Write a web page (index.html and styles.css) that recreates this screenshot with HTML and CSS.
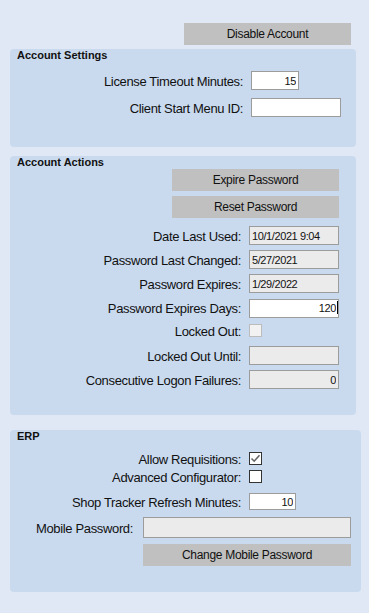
FILE: index.html
```html
<!DOCTYPE html>
<html lang="en">
<head>
    <meta charset="UTF-8">
    <meta name="viewport" content="width=device-width, initial-scale=1.0">
    <title>User Account</title>
    <link rel="stylesheet" href="styles.css">
</head>
<body>
    <div class="page">
        <div class="top-bar">
            <button class="btn">Disable Account</button>
        </div>

        <!-- Account Settings -->
        <div class="panel panel-settings">
            <div class="panel-title">Account Settings</div>
            <div class="panel-body">
                <div class="row">
                    <label class="lbl lbl-wide">License Timeout Minutes:</label>
                    <input class="field field-sm num" type="text" value="15">
                </div>
                <div class="row">
                    <label class="lbl lbl-wide">Client Start Menu ID:</label>
                    <input class="field field-md" type="text" value="">
                </div>
            </div>
        </div>

        <!-- Account Actions -->
        <div class="panel panel-actions">
            <div class="panel-title">Account Actions</div>
            <div class="panel-body">
                <div class="btn-row">
                    <button class="btn">Expire Password</button>
                </div>
                <div class="btn-row">
                    <button class="btn">Reset Password</button>
                </div>
                <div class="row row-first">
                    <label class="lbl">Date Last Used:</label>
                    <input class="field" type="text" value="10/1/2021 9:04" disabled>
                </div>
                <div class="row">
                    <label class="lbl">Password Last Changed:</label>
                    <input class="field" type="text" value="5/27/2021" disabled>
                </div>
                <div class="row">
                    <label class="lbl">Password Expires:</label>
                    <input class="field" type="text" value="1/29/2022" disabled>
                </div>
                <div class="row">
                    <label class="lbl">Password Expires Days:</label>
                    <span class="field-wrap">
                        <input class="field num" type="text" value="120">
                        <span class="caret"></span>
                    </span>
                </div>
                <div class="row row-check">
                    <label class="lbl">Locked Out:</label>
                    <span class="check check-disabled"></span>
                </div>
                <div class="row">
                    <label class="lbl">Locked Out Until:</label>
                    <input class="field" type="text" value="" disabled>
                </div>
                <div class="row">
                    <label class="lbl">Consecutive Logon Failures:</label>
                    <input class="field num" type="text" value="0" disabled>
                </div>
            </div>
        </div>

        <!-- ERP -->
        <div class="panel panel-erp">
            <div class="panel-title">ERP</div>
            <div class="panel-body">
                <div class="row row-cb">
                    <label class="lbl">Allow Requisitions:</label>
                    <span class="check">
                        <svg width="11" height="11" viewBox="0 0 11 11">
                            <path d="M1.5 5.5 L4.2 8.2 L9.5 2.2" fill="none" stroke="#666" stroke-width="1.6"/>
                        </svg>
                    </span>
                </div>
                <div class="row row-cb">
                    <label class="lbl">Advanced Configurator:</label>
                    <span class="check"></span>
                </div>
                <div class="row row-shop">
                    <label class="lbl">Shop Tracker Refresh Minutes:</label>
                    <input class="field field-shop num" type="text" value="10">
                </div>
                <div class="row row-mobile">
                    <label class="lbl lbl-short">Mobile Password:</label>
                    <input class="field field-mobile" type="text" value="" disabled>
                </div>
                <div class="btn-row btn-row-mobile">
                    <button class="btn btn-mobile">Change Mobile Password</button>
                </div>
            </div>
        </div>
    </div>
</body>
</html>
```

FILE: styles.css
```css
body {
    margin: 0;
    background-color: #dfe8f4;
    font-family: 'Liberation Sans', Arial, sans-serif;
    color: #111;
}
.page {
    padding: 23px 0 0 10px;
}
.top-bar {
    display: flex;
    justify-content: flex-end;
    padding-right: 18px;
}
.btn {
    width: 167px;
    height: 22px;
    padding: 0;
    border: none;
    background-color: #c0c0c0;
    font-family: 'Liberation Sans', Arial, sans-serif;
    font-size: 12px;
    letter-spacing: -0.3px;
    color: #111;
}
.panel {
    background-color: #c9daef;
    border-radius: 4px;
}
.panel-settings {
    width: 346px;
    margin-top: 4px;
}
.panel-actions {
    width: 346px;
    margin-top: 9px;
}
.panel-erp {
    width: 351px;
    margin-top: 15px;
}
.panel-title {
    font-size: 11px;
    font-weight: bold;
    line-height: 13px;
    padding: 0 7px;
}
.panel-body {
    display: flex;
    flex-direction: column;
}
.panel-settings .panel-body {
    padding: 9px 0 30px;
    gap: 8px;
}
.panel-actions .panel-body {
    padding: 0 0 26px;
    gap: 5px;
}
.panel-erp .panel-body {
    padding: 6px 0 26px;
}
.row {
    display: flex;
    align-items: center;
    height: 19px;
}
.lbl {
    width: 231px;
    margin-right: 8px;
    text-align: right;
    font-size: 13px;
    letter-spacing: -0.35px;
    padding-top: 2px;
    white-space: nowrap;
}
.lbl-wide {
    width: 233px;
}
.lbl-short {
    width: 123px;
    margin-right: 10px;
}
.field {
    box-sizing: border-box;
    width: 90px;
    height: 19px;
    margin: 0;
    padding: 0 2px;
    border: 1px solid #9c9c9c;
    background-color: #fff;
    font-family: 'Liberation Sans', Arial, sans-serif;
    font-size: 11px;
    letter-spacing: -0.4px;
    color: #111;
}
.field:disabled {
    background-color: #ebebeb;
    color: #111;
}
.num {
    text-align: right;
}
.field-sm {
    width: 48px;
}
.field-md {
    width: 90px;
}
.field-shop {
    width: 47px;
    height: 17px;
}
.field-mobile {
    width: 208px;
    height: 21px;
}
.field-wrap {
    position: relative;
    display: inline-block;
    height: 19px;
}
.caret {
    position: absolute;
    right: 1px;
    top: 3px;
    width: 1px;
    height: 13px;
    background-color: #000;
}
.btn-row {
    display: flex;
    padding-left: 162px;
}
.row-first {
    margin-top: 3px;
}
.row-check {
    margin-top: -1px;
    margin-bottom: 1px;
}
.check {
    box-sizing: border-box;
    display: inline-flex;
    align-items: center;
    justify-content: center;
    width: 13px;
    height: 13px;
    border: 1px solid #333;
    background-color: #fff;
}
.check-disabled {
    border-color: #bcbcbc;
    background-color: #f2f2f2;
}
.row-cb {
    height: 18px;
}
.row-shop {
    height: 17px;
    margin-top: 8px;
}
.row-mobile {
    height: 21px;
    margin-top: 7px;
}
.btn-row-mobile {
    padding-left: 133px;
    margin-top: 6px;
}
.btn-mobile {
    width: 208px;
}
```
